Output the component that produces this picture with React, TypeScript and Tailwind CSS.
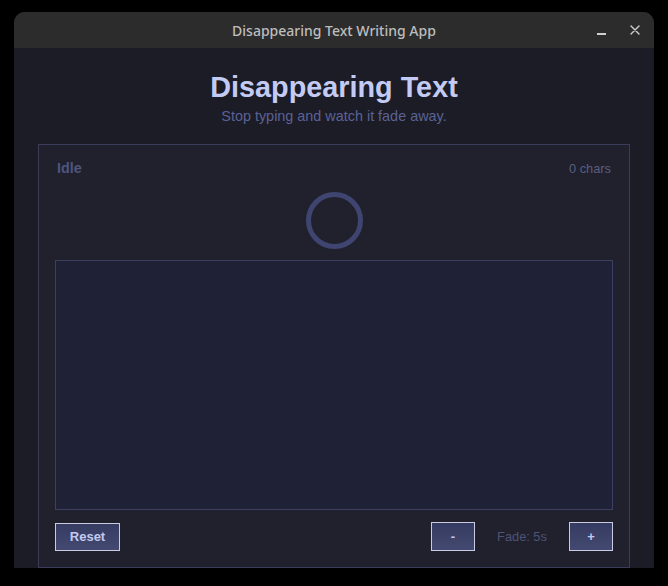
import React from "react";

export default function App() {
  return (
    <div className="min-h-[586px] w-[668px] bg-black pt-[12px] pl-[14px]" style={{ fontFamily: '"Liberation Sans", Arial, sans-serif' }}>
      <div className="flex h-[556px] w-[640px] flex-col overflow-hidden rounded-t-[11px] bg-[#1b1c25]">
        {/* title bar */}
        <div className="relative flex h-[36px] shrink-0 items-center justify-center bg-[#2c2c2c]">
          <span className="text-[14px] font-medium text-[#bdbdbd]" style={{ fontFamily: '"Noto Sans", "DejaVu Sans", sans-serif' }}>
            Disappearing Text Writing App
          </span>
          <div className="absolute right-[14px] top-0 flex h-full items-center gap-[24px]">
            <span className="mt-[8px] block h-[1.5px] w-[9px] bg-[#cfcfcf]" />
            <svg width="10" height="10" viewBox="0 0 10 10">
              <path d="M1 1 L9 9 M9 1 L1 9" stroke="#d0d0d0" strokeWidth="1.4" strokeLinecap="round" />
            </svg>
          </div>
        </div>
        {/* content */}
        <div className="flex flex-1 flex-col px-[24px]">
          <h1 className="mt-[22px] text-center text-[28.8px] font-bold leading-[34px] text-[#c3cbf4]">Disappearing Text</h1>
          <p className="mt-[3px] text-center text-[14.4px] leading-[18px] text-[#5c6296]">Stop typing and watch it fade away.</p>
          <div className="mt-[19px] flex h-[424px] flex-col border border-[#3a3d59] bg-[#20212d] p-4">
            <div className="flex h-[16px] items-center justify-between">
              <span className="pl-[2px] text-[14.4px] font-bold text-[#4f557f]">Idle</span>
              <span className="pr-[2px] text-[12.8px] text-[#5a5e7e]">0 chars</span>
            </div>
            <div className="mt-[15px] flex justify-center">
              <div className="h-[57px] w-[57px] rounded-full border-[5px] border-[#3f4570]" />
            </div>
            <div className="mt-[11px] h-[251px] border border-[#3c3f5f] bg-[#1f2236]" />
            <div className="mt-[12px] flex items-center justify-between">
              <button className="h-[28px] w-[65px] border border-[#c9cbe0] bg-gradient-to-b from-[#363b62] to-[#444971] text-[13px] font-bold text-[#c2caf0]">
                Reset
              </button>
              <div className="flex items-center">
                <button className="h-[29px] w-[44px] border border-[#c9cbe0] bg-gradient-to-b from-[#363b62] to-[#444971] text-[13px] font-bold text-[#c2caf0]">
                  -
                </button>
                <span className="w-[94px] text-center text-[12.8px] text-[#4e5377]">Fade: 5s</span>
                <button className="h-[29px] w-[44px] border border-[#c9cbe0] bg-gradient-to-b from-[#363b62] to-[#444971] text-[13px] font-bold text-[#c2caf0]">
                  +
                </button>
              </div>
            </div>
          </div>
        </div>
      </div>
    </div>
  );
}
